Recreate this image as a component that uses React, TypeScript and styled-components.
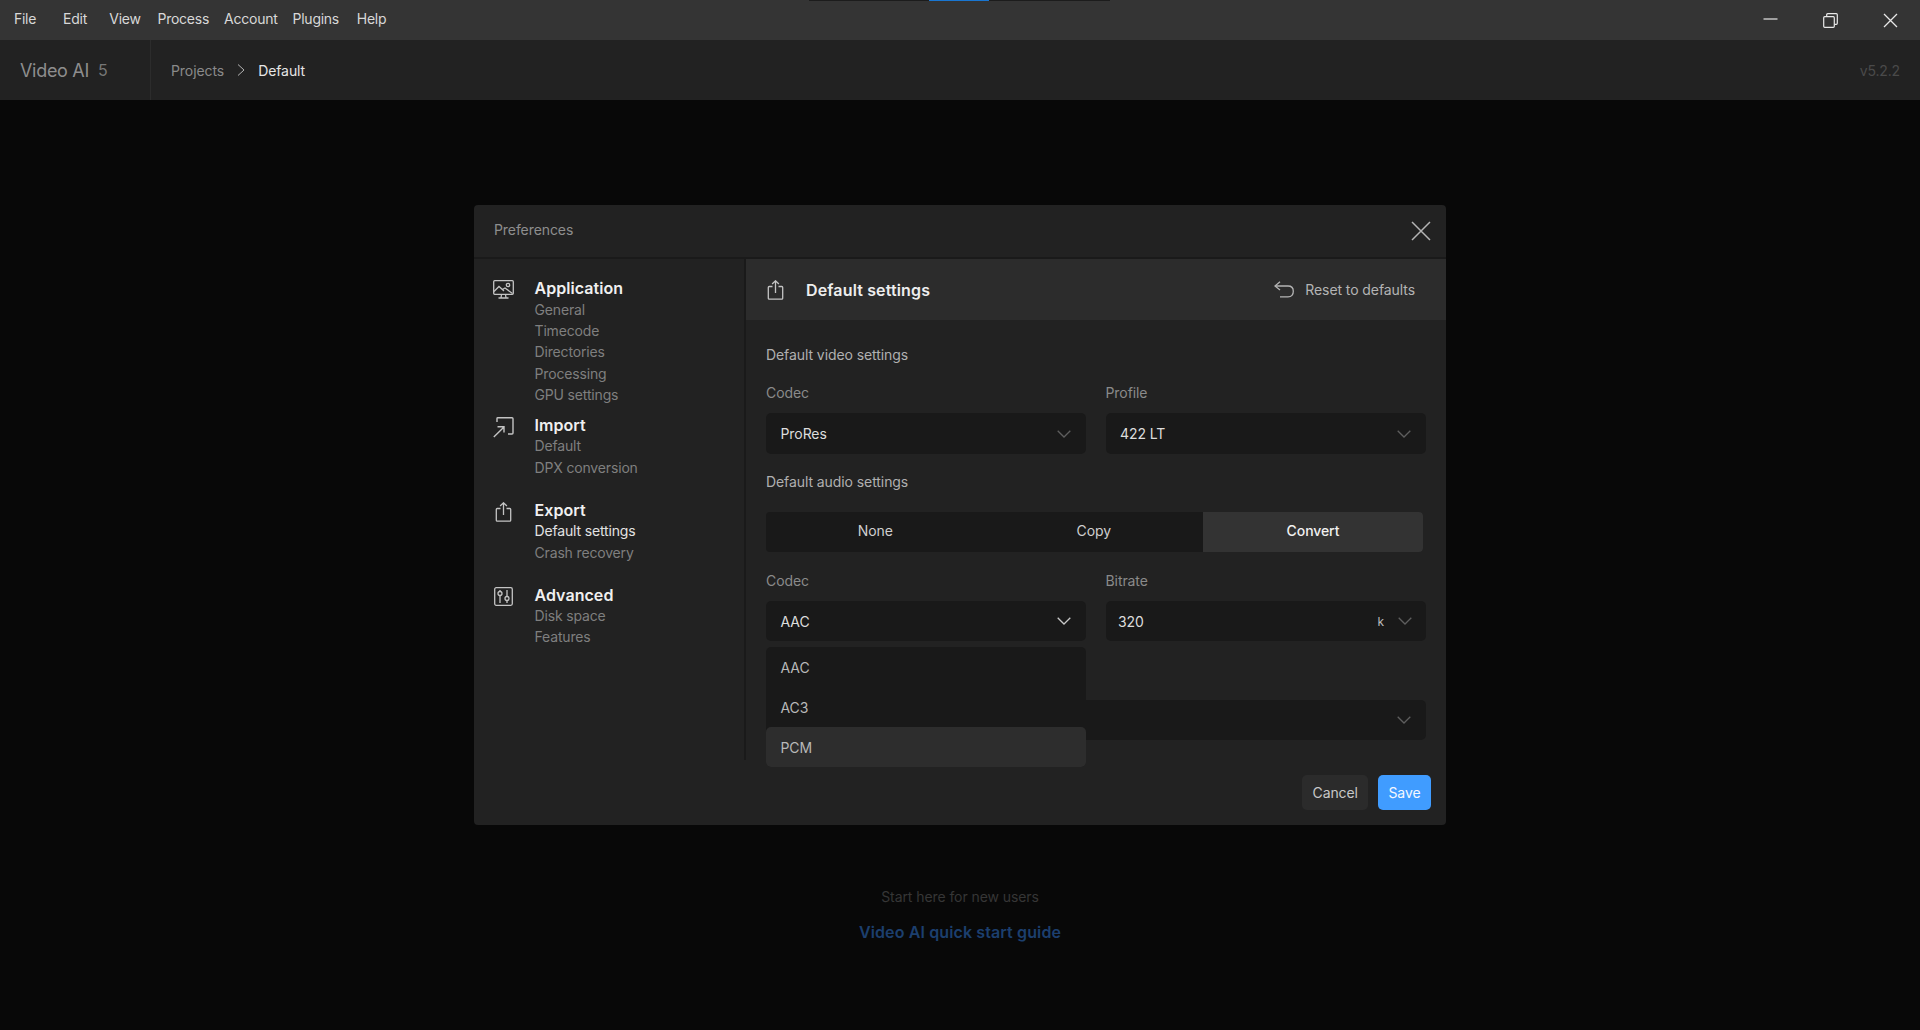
import React from 'react';
import styled, { createGlobalStyle } from 'styled-components';

const GlobalStyle = createGlobalStyle`
    html, body {
        margin: 0;
        padding: 0;
        background: #080808;
    }
    * {
        box-sizing: border-box;
    }
    body {
        font-family: Inter, "Liberation Sans", sans-serif;
        font-size: 14px;
        letter-spacing: -0.08px;
    }
`;

const Page = styled.div`
    position: relative;
    display: flex;
    flex-direction: column;
    width: 1920px;
    height: 1030px;
    overflow: hidden;
    background: #080808;
`;

const TitleBar = styled.div`
    position: relative;
    display: flex;
    align-items: flex-start;
    justify-content: space-between;
    height: 40px;
    flex: none;
    background: #343434;
`;

const ProgressLine = styled.div`
    position: absolute;
    top: 0;
    left: 809px;
    width: 301px;
    height: 1px;
    background: #1c1c1c;
    &::after {
        content: '';
        position: absolute;
        left: 120px;
        top: 0;
        width: 60px;
        height: 1px;
        background: #1976d2;
    }
`;

const Menu = styled.div`
    display: flex;
    height: 36px;
    align-items: center;
`;

const MenuItem = styled.div`
    min-width: 50px;
    padding: 0 7.5px;
    text-align: center;
    letter-spacing: -0.25px;
    color: #d8d8d8;
`;

const WindowButtons = styled.div`
    display: flex;
`;

const WindowButton = styled.div`
    display: flex;
    align-items: center;
    justify-content: center;
    width: 60px;
    height: 40px;
    color: #e8e8e8;
`;

const AppHeader = styled.div`
    display: flex;
    align-items: center;
    height: 60px;
    flex: none;
    background: #222222;
`;

const Brand = styled.div`
    display: flex;
    align-items: center;
    gap: 9px;
    width: 151px;
    height: 100%;
    padding-left: 20px;
    border-right: 1px solid #2c2c2c;
    font-size: 18px;
    letter-spacing: -0.3px;
    color: #8e8e8e;
`;

const BrandVersion = styled.span`
    font-size: 16px;
    color: #777777;
`;

const Breadcrumb = styled.div`
    display: flex;
    align-items: center;
    gap: 13px;
    padding-left: 20px;
    flex: 1;
`;

const Crumb = styled.span<{ $current?: boolean }>`
    color: ${(props) => (props.$current ? '#e6e6e6' : '#8a8a8a')};
`;

const AppVersion = styled.div`
    padding-right: 20px;
    letter-spacing: -0.15px;
    color: #4a4a4a;
`;

const Main = styled.div`
    flex: 1;
    display: flex;
    flex-direction: column;
    align-items: center;
    padding-top: 787px;
`;

const GuideHint = styled.div`
    line-height: 20px;
    color: #363636;
`;

const GuideLink = styled.div`
    margin-top: 15px;
    font-size: 16px;
    line-height: 20px;
    font-weight: 600;
    letter-spacing: 0.12px;
    color: #1c3f6e;
`;

const Overlay = styled.div`
    position: absolute;
    inset: 0;
    display: flex;
    justify-content: center;
    padding-top: 205px;
`;

const Modal = styled.div`
    display: flex;
    flex-direction: column;
    width: 972px;
    height: 620px;
    background: #222222;
    border-radius: 4px;
`;

const ModalHeader = styled.div`
    display: flex;
    align-items: center;
    justify-content: space-between;
    height: 54px;
    flex: none;
    padding: 0 15px 4px 20px;
    border-bottom: 2px solid #1a1a1a;
    color: #8e8e8e;
`;

const CloseIcon = styled.div`
    display: flex;
    margin-top: 3px;
    color: #b4b4b4;
`;

const ModalBody = styled.div`
    display: flex;
    height: 501px;
    flex: none;
`;

const Sidebar = styled.div`
    width: 272px;
    flex: none;
    padding: 19px 0 0 19px;
    border-right: 2px solid #1a1a1a;
`;

const NavGroup = styled.div<{ $gap: number }>`
    display: flex;
    gap: 20.5px;
    margin-bottom: ${(props) => props.$gap}px;
`;

const NavIcon = styled.div`
    display: flex;
    justify-content: center;
    align-items: flex-start;
    width: 21px;
    flex: none;
    padding-top: 2px;
    color: #c4c4c4;
`;

const NavLinks = styled.div`
    display: flex;
    flex-direction: column;
    line-height: 21.3px;
`;

const NavHeading = styled.div`
    margin-bottom: -0.7px;
    font-size: 16px;
    font-weight: 600;
    letter-spacing: 0.05px;
    color: #f0f0f0;
`;

const NavLink = styled.div<{ $active?: boolean }>`
    letter-spacing: -0.16px;
    color: ${(props) => (props.$active ? '#e2e2e2' : '#7f7f7f')};
`;

const Panel = styled.div`
    display: flex;
    flex-direction: column;
    width: 700px;
`;

const PanelHeader = styled.div`
    display: flex;
    align-items: center;
    height: 61px;
    flex: none;
    padding: 0 31px 0 21px;
    background: #2c2c2c;
`;

const PanelIcon = styled.div`
    display: flex;
    width: 39px;
    color: #c4c4c4;
`;

const PanelTitle = styled.div`
    flex: 1;
    font-size: 16px;
    font-weight: 600;
    letter-spacing: 0.14px;
    color: #eeeeee;
`;

const ResetButton = styled.div`
    display: flex;
    align-items: center;
    gap: 11px;
    color: #b4b4b4;
`;

const PanelContent = styled.div`
    flex: 1;
    padding: 25px 20px 0 20px;
`;

const SectionTitle = styled.div<{ $top?: number }>`
    line-height: 20px;
    margin-top: ${(props) => props.$top ?? 0}px;
    color: #b0b0b0;
`;

const FieldRow = styled.div<{ $top: number }>`
    display: grid;
    grid-template-columns: 319.5px 320px;
    column-gap: 20px;
    margin-top: ${(props) => props.$top}px;
`;

const Field = styled.div`
    position: relative;
    display: flex;
    flex-direction: column;
`;

const FieldLabel = styled.div`
    line-height: 20px;
    margin-bottom: 10px;
    color: #8a8a8a;
`;

const Select = styled.div<{ $height?: number }>`
    display: flex;
    align-items: center;
    height: ${(props) => props.$height ?? 40}px;
    padding: 0 15px 0 14.5px;
    background: #191919;
    border-radius: 5px;
    color: #dddddd;
`;

const SelectValue = styled.span<{ $narrow?: boolean }>`
    flex: 1;
    margin-left: ${(props) => (props.$narrow ? -2 : 0)}px;
`;

const Unit = styled.span`
    margin-right: 14px;
    font-size: 12px;
    color: #bbbbbb;
`;

const Chevron = styled.div<{ $open?: boolean; $shift?: number }>`
    display: flex;
    margin-right: ${(props) => -(props.$shift ?? 0)}px;
    color: ${(props) => (props.$open ? '#c8c8c8' : '#5e5e5e')};
`;

const WideSelect = styled(Select)`
    justify-content: flex-end;
    margin-top: 59px;
`;

const Segments = styled.div`
    display: grid;
    grid-template-columns: 218.5px 218.5px 220px;
    width: 657px;
    height: 40px;
    margin-top: 20px;
    background: #191919;
    border-radius: 4px;
`;

const Segment = styled.div<{ $active?: boolean }>`
    display: flex;
    align-items: center;
    justify-content: center;
    padding-bottom: 3px;
    border-radius: ${(props) => (props.$active ? '0 4px 4px 0' : '0')};
    background: ${(props) => (props.$active ? '#333333' : 'transparent')};
    color: ${(props) => (props.$active ? '#f0f0f0' : '#cfcfcf')};
    font-weight: ${(props) => (props.$active ? 500 : 400)};
`;

const Dropdown = styled.div`
    position: absolute;
    top: calc(100% + 6px);
    left: 0;
    right: 0;
    z-index: 2;
    background: #191919;
    border-radius: 5px;
`;

const DropdownItem = styled.div<{ $hover?: boolean }>`
    display: flex;
    align-items: center;
    height: 40px;
    padding-left: 14.5px;
    border-radius: 5px;
    background: ${(props) => (props.$hover ? '#2d2d2d' : 'transparent')};
    color: #b8b8b8;
`;

const ModalFooter = styled.div`
    display: flex;
    justify-content: flex-end;
    gap: 10px;
    padding: 15px 15px 0 0;
`;

const Button = styled.div<{ $primary?: boolean }>`
    display: flex;
    align-items: center;
    justify-content: center;
    height: 35px;
    padding: 0 ${(props) => (props.$primary ? 10.5 : 10)}px;
    border-radius: 5px;
    background: ${(props) => (props.$primary ? '#409cff' : '#2b2b2b')};
    color: ${(props) => (props.$primary ? '#f4f8ff' : '#c8c8c8')};
`;

const DownIcon = () => (
    <svg width="14" height="8" viewBox="0 0 14 8" fill="none" stroke="currentColor" strokeWidth="1.3">
        <path d="M0.7 0.8 7 7 13.3 0.8" />
    </svg>
);

const CrumbArrow = () => (
    <svg width="8" height="12" viewBox="0 0 8 12" fill="none" stroke="#b4b4b4" strokeWidth="1">
        <path d="M1 0.5 7 6 1 11.5" />
    </svg>
);

const MonitorIcon = () => (
    <svg width="21" height="19" viewBox="0 0 21 19" fill="none" stroke="currentColor" strokeWidth="1.3">
        <rect x="0.7" y="0.7" width="19.6" height="13.6" rx="1" />
        <path d="M1 11.5 6 6.5 11 11 M9.5 9.5 12 8 19.5 13.5" />
        <circle cx="15" cy="5" r="1.7" />
        <path d="M8.5 14.5 8 17.8 M12.5 14.5 13 17.8 M5.5 18 H15.5" />
    </svg>
);

const ImportIcon = () => (
    <svg width="21" height="21" viewBox="0 0 21 21" fill="none" stroke="currentColor" strokeWidth="1.4">
        <path d="M4 5 V1.5 Q4 0.8 4.8 0.8 H19 Q20 0.8 20 1.8 V16 Q20 17 19 17 H15" />
        <path d="M0.8 20 10.5 10.5 M4.5 9.8 H11 V15.5" />
    </svg>
);

const ExportIcon = () => (
    <svg width="17" height="20" viewBox="0 0 16 20" fill="none" stroke="currentColor" strokeWidth="1.3">
        <path d="M5 6.5 H1.7 Q0.8 6.5 0.8 7.5 V18.2 Q0.8 19.2 1.7 19.2 H14.3 Q15.2 19.2 15.2 18.2 V7.5 Q15.2 6.5 14.3 6.5 H11" />
        <path d="M8 13 V1 M4.6 4 8 0.8 11.4 4" />
    </svg>
);

const SlidersIcon = () => (
    <svg width="19" height="19" viewBox="0 0 19 19" fill="none" stroke="currentColor" strokeWidth="1.3">
        <rect x="0.7" y="0.7" width="17.6" height="17.6" rx="1.5" />
        <circle cx="6" cy="6.5" r="2" />
        <path d="M6 3 V4.5 M6 8.5 V16" />
        <circle cx="13" cy="11.5" r="2" />
        <path d="M13 3 V9.5 M13 13.5 V16" />
    </svg>
);

const ResetIcon = () => (
    <svg width="20" height="17" viewBox="0 0 20 17" fill="none" stroke="currentColor" strokeWidth="1.3">
        <path d="M6 0.8 1 5 6 9" />
        <path d="M1 5 H14 Q19.3 5 19.3 10.3 Q19.3 15.8 14 15.8 H6" />
    </svg>
);

const sections = [
    { title: 'Application', icon: <MonitorIcon />, gap: 9.7, links: ['General', 'Timecode', 'Directories', 'Processing', 'GPU settings'] },
    { title: 'Import', icon: <ImportIcon />, gap: 21.7, links: ['Default', 'DPX conversion'] },
    { title: 'Export', icon: <ExportIcon />, gap: 21.7, links: ['Default settings', 'Crash recovery'], active: 'Default settings' },
    { title: 'Advanced', icon: <SlidersIcon />, gap: 0, links: ['Disk space', 'Features'] },
];

const menus = ['File', 'Edit', 'View', 'Process', 'Account', 'Plugins', 'Help'];

export default function App() {
    return (
        <Page>
            <GlobalStyle />
            <TitleBar>
                <ProgressLine />
                <Menu>
                    {menus.map((m) => (
                        <MenuItem key={m}>{m}</MenuItem>
                    ))}
                </Menu>
                <WindowButtons>
                    <WindowButton>
                        <svg width="15" height="15" viewBox="0 0 15 15" stroke="currentColor" strokeWidth="1.2">
                            <path d="M0.5 6 H14.5" />
                        </svg>
                    </WindowButton>
                    <WindowButton>
                        <svg width="15" height="15" viewBox="0 0 15 15" fill="none" stroke="currentColor" strokeWidth="1.2">
                            <rect x="0.7" y="3.7" width="10.6" height="10.6" rx="1" />
                            <path d="M3.7 3.5 V1.7 Q3.7 0.7 4.7 0.7 H13.3 Q14.3 0.7 14.3 1.7 V10.3 Q14.3 11.3 13.3 11.3 H11.5" />
                        </svg>
                    </WindowButton>
                    <WindowButton>
                        <svg width="15" height="15" viewBox="0 0 15 15" stroke="currentColor" strokeWidth="1.3">
                            <path d="M1 1 14 14 M14 1 1 14" />
                        </svg>
                    </WindowButton>
                </WindowButtons>
            </TitleBar>
            <AppHeader>
                <Brand>
                    Video AI <BrandVersion>5</BrandVersion>
                </Brand>
                <Breadcrumb>
                    <Crumb>Projects</Crumb>
                    <CrumbArrow />
                    <Crumb $current>Default</Crumb>
                </Breadcrumb>
                <AppVersion>v5.2.2</AppVersion>
            </AppHeader>
            <Main>
                <GuideHint>Start here for new users</GuideHint>
                <GuideLink>Video AI quick start guide</GuideLink>
            </Main>
            <Overlay>
                <Modal>
                    <ModalHeader>
                        Preferences
                        <CloseIcon>
                            <svg width="20" height="20" viewBox="0 0 20 20" stroke="currentColor" strokeWidth="1.5">
                                <path d="M1 1 19 19 M19 1 1 19" />
                            </svg>
                        </CloseIcon>
                    </ModalHeader>
                    <ModalBody>
                        <Sidebar>
                            {sections.map((s) => (
                                <NavGroup key={s.title} $gap={s.gap}>
                                    <NavIcon>{s.icon}</NavIcon>
                                    <NavLinks>
                                        <NavHeading>{s.title}</NavHeading>
                                        {s.links.map((l) => (
                                            <NavLink key={l} $active={s.active === l}>
                                                {l}
                                            </NavLink>
                                        ))}
                                    </NavLinks>
                                </NavGroup>
                            ))}
                        </Sidebar>
                        <Panel>
                            <PanelHeader>
                                <PanelIcon>
                                    <ExportIcon />
                                </PanelIcon>
                                <PanelTitle>Default settings</PanelTitle>
                                <ResetButton>
                                    <ResetIcon />
                                    Reset to defaults
                                </ResetButton>
                            </PanelHeader>
                            <PanelContent>
                                <SectionTitle>Default video settings</SectionTitle>
                                <FieldRow $top={18}>
                                    <Field>
                                        <FieldLabel>Codec</FieldLabel>
                                        <Select $height={41}>
                                            <SelectValue>ProRes</SelectValue>
                                            <Chevron>
                                                <DownIcon />
                                            </Chevron>
                                        </Select>
                                    </Field>
                                    <Field>
                                        <FieldLabel>Profile</FieldLabel>
                                        <Select $height={41}>
                                            <SelectValue>422 LT</SelectValue>
                                            <Chevron>
                                                <DownIcon />
                                            </Chevron>
                                        </Select>
                                    </Field>
                                </FieldRow>
                                <SectionTitle $top={18}>Default audio settings</SectionTitle>
                                <Segments>
                                    <Segment>None</Segment>
                                    <Segment>Copy</Segment>
                                    <Segment $active>Convert</Segment>
                                </Segments>
                                <FieldRow $top={19}>
                                    <Field>
                                        <FieldLabel>Codec</FieldLabel>
                                        <Select>
                                            <SelectValue>AAC</SelectValue>
                                            <Chevron $open>
                                                <DownIcon />
                                            </Chevron>
                                        </Select>
                                        <Dropdown>
                                            <DropdownItem>AAC</DropdownItem>
                                            <DropdownItem>AC3</DropdownItem>
                                            <DropdownItem $hover>PCM</DropdownItem>
                                        </Dropdown>
                                    </Field>
                                    <Field>
                                        <FieldLabel>Bitrate</FieldLabel>
                                        <Select>
                                            <SelectValue $narrow>320</SelectValue>
                                            <Unit>k</Unit>
                                            <Chevron $shift={1.5}>
                                                <DownIcon />
                                            </Chevron>
                                        </Select>
                                    </Field>
                                </FieldRow>
                                <WideSelect>
                                    <Chevron>
                                        <DownIcon />
                                    </Chevron>
                                </WideSelect>
                            </PanelContent>
                        </Panel>
                    </ModalBody>
                    <ModalFooter>
                        <Button>Cancel</Button>
                        <Button $primary>Save</Button>
                    </ModalFooter>
                </Modal>
            </Overlay>
        </Page>
    );
}
